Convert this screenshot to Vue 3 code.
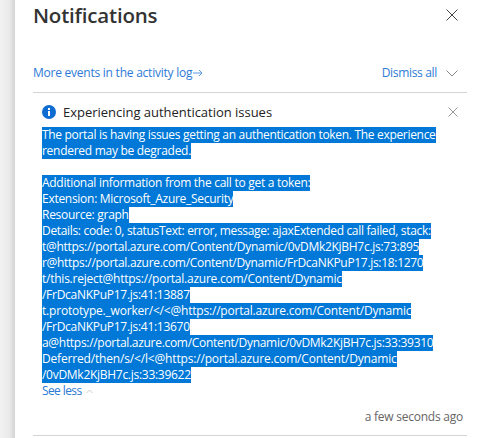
<script setup>
const lines = [
  { text: 'The portal is having issues getting an authentication token. The experience', ls: -0.31 },
  { text: 'rendered may be degraded.', ls: -0.28 },
  { text: '', ls: 0 },
  { text: 'Additional information from the call to get a token:', ls: -0.28 },
  { text: 'Extension: Microsoft_Azure_Security', ls: -0.28 },
  { text: 'Resource: graph', ls: -0.28 },
  { text: 'Details: code: 0, statusText: error, message: ajaxExtended call failed, stack:', ls: -0.33 },
  { text: 't@https://portal.azure.com/Content/Dynamic/0vDMk2KjBH7c.js:73:895', ls: -0.28 },
  { text: 'r@https://portal.azure.com/Content/Dynamic/FrDcaNKPuP17.js:18:1270', ls: -0.31 },
  { text: 't/this.reject@https://portal.azure.com/Content/Dynamic', ls: -0.24 },
  { text: '/FrDcaNKPuP17.js:41:13887', ls: -0.28 },
  { text: 't.prototype._worker/</<@https://portal.azure.com/Content/Dynamic', ls: -0.2 },
  { text: '/FrDcaNKPuP17.js:41:13670', ls: -0.28 },
  { text: 'a@https://portal.azure.com/Content/Dynamic/0vDMk2KjBH7c.js:33:39310', ls: -0.3 },
  { text: 'Deferred/then/s/</l<@https://portal.azure.com/Content/Dynamic', ls: -0.17 },
  { text: '/0vDMk2KjBH7c.js:33:39622', ls: -0.28 }
]
</script>

<template>
  <div class="page">
    <div class="shade"></div>
    <main class="panel">
      <header class="head">
        <h1 class="title">Notifications</h1>
        <svg class="x-big" width="12" height="12" viewBox="0 0 12 12"><path d="M.5.5l11 11M11.500.5l-11 11" stroke="#444" fill="none"/></svg>
      </header>
      <div class="tools">
        <a class="link">More events in the activity log<svg class="arrow" width="10" height="8" viewBox="0 0 10 8"><path d="M0 4h9M6 1l3 3-3 3" stroke="#5a9be0" fill="none"/></svg></a>
        <span class="right">
          <a class="link dismiss">Dismiss all</a>
          <svg width="12" height="7" viewBox="0 0 12 7"><path d="M.5.5L6 6l5.500-5.500" stroke="#888" fill="none"/></svg>
        </span>
      </div>
      <section class="note">
        <div class="note-head">
          <svg class="info" width="14" height="14" viewBox="0 0 14 14"><circle cx="7" cy="7" r="7" fill="#0f6cd0"/><rect x="6" y="6" width="2" height="5" fill="#fff"/><rect x="6" y="3" width="2" height="2" fill="#fff"/></svg>
          <h2 class="note-title">Experiencing authentication issues</h2>
          <svg class="x-small" width="10" height="10" viewBox="0 0 10 10"><path d="M.5.5l9 9M9.500.5l-9 9" stroke="#999" fill="none"/></svg>
        </div>
        <div class="body">
          <div v-for="(l, i) in lines" :key="i" class="line"><span v-if="l.text" class="sel" :style="{ letterSpacing: l.ls + 'px' }">{{ l.text }}</span></div>
        </div>
        <div class="less"><a class="link see">See less</a><svg width="7" height="5" viewBox="0 0 7 5"><path d="M.5 4L3.500 1l3 3" stroke="#ccc" fill="none"/></svg></div>
        <div class="time">a few seconds ago</div>
      </section>
      <div class="end"></div>
    </main>
  </div>
</template>

<style>
html, body { margin: 0; background: #fff; overflow: hidden; }
</style>

<style scoped>
.page { display: flex; width: 485px; height: 438px; overflow: hidden; font-family: "Open Sans", "Noto Sans", sans-serif; font-size: 12px; letter-spacing: -0.24px; color: #333; background: #fff; }
.shade { width: 15px; flex: none; background: linear-gradient(to right, #f2f2f2, #eaeaea 60%, #d4d4d4); }
.panel { width: 434px; margin-left: 18px; display: flex; flex-direction: column; }
.head { height: 30px; display: flex; justify-content: space-between; align-items: center; padding-right: 9px; }
.title { margin: 0; font-size: 20.5px; font-weight: 600; letter-spacing: -0.2px; color: #333; line-height: 30px; }
.tools { margin-top: 35px; height: 27px; display: flex; justify-content: space-between; align-items: flex-start; border-bottom: 1px solid #d4d4d4; padding-right: 9px; line-height: 16px; }
.link { color: #2d7ad6; }
.dismiss { letter-spacing: -0.32px; }
.see { letter-spacing: -0.6px; }
.arrow { margin-left: 1px; }
.right { display: flex; align-items: center; gap: 9px; }
.note { padding: 11px 0 0 9px; }
.note-head { height: 16px; display: flex; align-items: center; margin-bottom: 7px; padding-right: 9px; }
.info { flex: none; margin-right: 7px; }
.note-title { margin: 0; flex: 1; font-size: 13px; font-weight: 400; letter-spacing: -0.02px; color: #222; }
.line { height: 16px; line-height: 15px; white-space: pre; }
.sel { display: inline-block; height: 16px; background: #0078d7; color: #fff; }
.less { height: 16px; line-height: 16px; display: flex; align-items: center; gap: 4px; }
.time { margin-top: 10px; text-align: right; color: #666; line-height: 16px; padding-right: 4px; }
.end { margin-top: 10px; border-top: 1px solid #d4d4d4; }
</style>
